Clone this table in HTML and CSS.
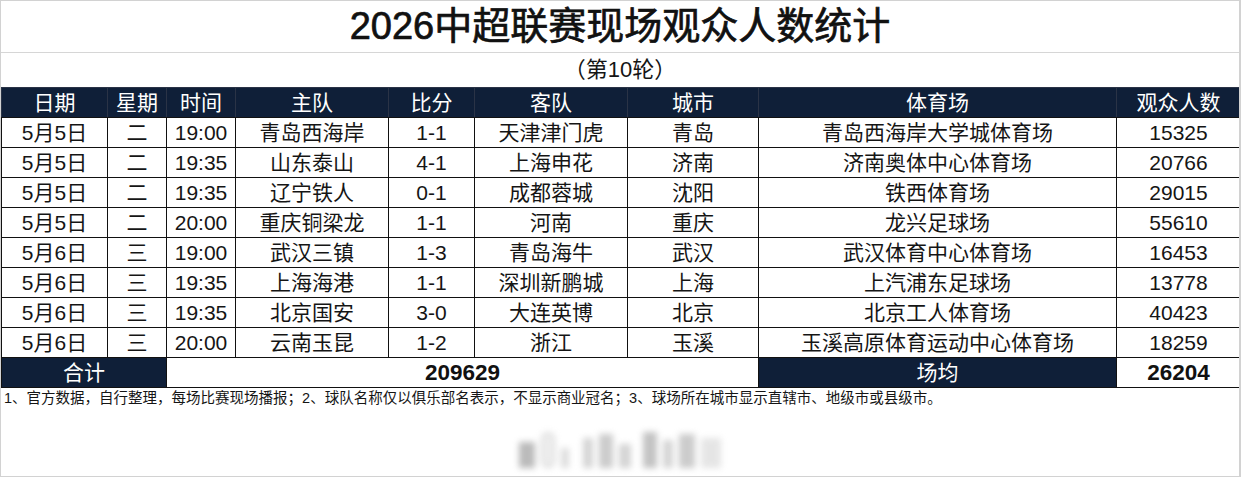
FILE: index.html
```html
<!DOCTYPE html>
<html lang="zh-CN">
<head>
<meta charset="utf-8">
<title>2026中超联赛现场观众人数统计</title>
<link rel="stylesheet" href="styles.css">
</head>
<body>
<div class="page">
  <div class="title">2026中超联赛现场观众人数统计</div>
  <div class="subtitle">（第10轮）</div>
  <table class="stats">
    <colgroup>
      <col class="c-date"><col class="c-week"><col class="c-time"><col class="c-home"><col class="c-score"><col class="c-away"><col class="c-city"><col class="c-venue"><col class="c-crowd">
    </colgroup>
    <thead>
      <tr><th>日期</th><th>星期</th><th>时间</th><th>主队</th><th>比分</th><th>客队</th><th>城市</th><th>体育场</th><th>观众人数</th></tr>
    </thead>
    <tbody>
      <tr><td>5月5日</td><td>二</td><td>19:00</td><td>青岛西海岸</td><td>1-1</td><td>天津津门虎</td><td>青岛</td><td>青岛西海岸大学城体育场</td><td>15325</td></tr>
      <tr><td>5月5日</td><td>二</td><td>19:35</td><td>山东泰山</td><td>4-1</td><td>上海申花</td><td>济南</td><td>济南奥体中心体育场</td><td>20766</td></tr>
      <tr><td>5月5日</td><td>二</td><td>19:35</td><td>辽宁铁人</td><td>0-1</td><td>成都蓉城</td><td>沈阳</td><td>铁西体育场</td><td>29015</td></tr>
      <tr><td>5月5日</td><td>二</td><td>20:00</td><td>重庆铜梁龙</td><td>1-1</td><td>河南</td><td>重庆</td><td>龙兴足球场</td><td>55610</td></tr>
      <tr><td>5月6日</td><td>三</td><td>19:00</td><td>武汉三镇</td><td>1-3</td><td>青岛海牛</td><td>武汉</td><td>武汉体育中心体育场</td><td>16453</td></tr>
      <tr><td>5月6日</td><td>三</td><td>19:35</td><td>上海海港</td><td>1-1</td><td>深圳新鹏城</td><td>上海</td><td>上汽浦东足球场</td><td>13778</td></tr>
      <tr><td>5月6日</td><td>三</td><td>19:35</td><td>北京国安</td><td>3-0</td><td>大连英博</td><td>北京</td><td>北京工人体育场</td><td>40423</td></tr>
      <tr><td>5月6日</td><td>三</td><td>20:00</td><td>云南玉昆</td><td>1-2</td><td>浙江</td><td>玉溪</td><td>玉溪高原体育运动中心体育场</td><td>18259</td></tr>
    </tbody>
    <tfoot>
      <tr><th colspan="2">合计</th><td colspan="5" class="sum">209629</td><th>场均</th><td class="sum">26204</td></tr>
    </tfoot>
  </table>
  <p class="note">1、官方数据，自行整理，每场比赛现场播报；2、球队名称仅以俱乐部名表示，不显示商业冠名；3、球场所在城市显示直辖市、地级市或县级市。</p>
  <div class="mark">
    <span class="b b1"></span><span class="ring"></span><span class="b b2"></span><span class="b b3"></span><span class="b b4"></span><span class="b b5"></span><span class="b b6"></span><span class="b b7"></span><span class="b b8"></span><span class="b b9"></span>
  </div>
</div>
</body>
</html>
```
FILE: styles.css
```css
* { box-sizing: border-box; }
html, body { margin: 0; padding: 0; background: #fff; }
body { font-family: "Liberation Sans", "Noto Sans CJK SC", sans-serif; color: #151515; }

.page {
  width: 1241px;
  height: 477px;
  border: 1px solid #d2d2d2;
  border-right-width: 2px;
  overflow: hidden;
  background: #fff;
}

.title {
  height: 52px;
  border-bottom: 1px solid #d6d6d6;
  font-size: 38px;
  font-weight: 400;
  line-height: 51px;
  text-align: center;
  color: #111;
  -webkit-text-stroke: 0.7px #111;
}

.subtitle {
  height: 34px;
  font-size: 22px;
  line-height: 33px;
  text-align: center;
  color: #151515;
}

.stats {
  width: 1239px;
  border-collapse: collapse;
  table-layout: fixed;
  font-size: 21px;
}
.c-date { width: 106px; }
.c-week { width: 59px; }
.c-time { width: 69px; }
.c-home { width: 153px; }
.c-score { width: 86px; }
.c-away { width: 153px; }
.c-city { width: 131px; }
.c-venue { width: 358px; }
.c-crowd { width: 124px; }

.stats th, .stats td {
  height: 30px;
  padding: 0;
  text-align: center;
  white-space: nowrap;
  line-height: 28px;
}
.stats th {
  background: #0f1f38;
  color: #fff;
  font-weight: 400;
  border: 1px solid #2a3346;
}
.stats td {
  border: 1px solid #111;
  color: #151515;
}
.stats thead th { border-bottom-color: #111; }
.stats tfoot th { border-color: #111; }
.stats td.sum {
  font-weight: 700;
  font-size: 22.5px;
  color: #111;
}

.note {
  margin: 0;
  padding: 0 0 0 3px;
  font-size: 14.5px;
  line-height: 20px;
  color: #151515;
  white-space: nowrap;
}

.mark {
  display: flex;
  justify-content: center;
  align-items: flex-end;
  gap: 6px;
  height: 44px;
  margin-top: 16px;
  filter: blur(3px);
  opacity: 0.5;
}
.mark .b { display: block; width: 12px; background: #999; }
.mark .ring {
  display: block; width: 14px; height: 36px;
  border: 2px solid #aaa; border-radius: 7px; background: #ddd;
}
.mark .b1 { height: 26px; width: 16px; background: #777; }
.mark .b2 { height: 20px; width: 8px; background: #bbb; }
.mark .b3 { height: 30px; width: 10px; background: #aaa; margin-left: 8px; }
.mark .b4 { height: 34px; width: 14px; background: #999; }
.mark .b5 { height: 24px; width: 12px; background: #aaa; }
.mark .b6 { height: 36px; width: 14px; background: #888; margin-left: 6px; }
.mark .b7 { height: 28px; width: 10px; background: #aaa; }
.mark .b8 { height: 34px; width: 16px; background: #999; }
.mark .b9 { height: 30px; width: 20px; background: #ccc; }
```
